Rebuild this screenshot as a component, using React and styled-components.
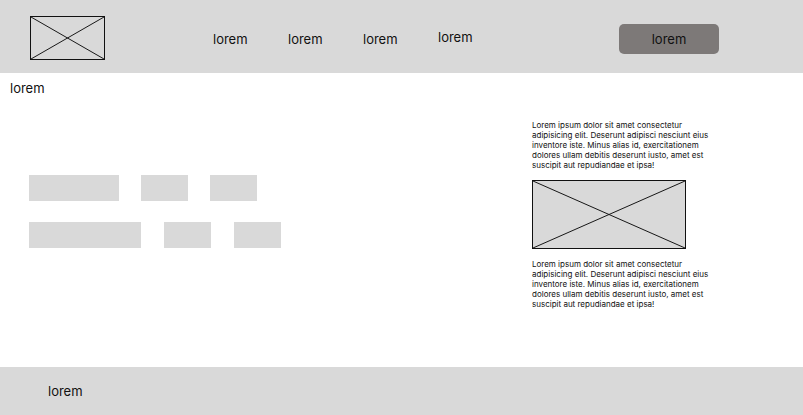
import styled, { createGlobalStyle } from "styled-components";

const GlobalStyle = createGlobalStyle`
  * {
    box-sizing: border-box;
  }

  body {
    margin: 0;
    font-family: "Inter", "Liberation Sans", sans-serif;
    color: #111;
    background: #fff;
  }
`;

const texto =
  "Lorem ipsum dolor sit amet consectetur adipisicing elit. Deserunt adipisci nesciunt eius inventore iste. Minus alias id, exercitationem dolores ullam debitis deserunt iusto, amet est suscipit aut repudiandae et ipsa!";

function Placeholder({ width, height, fill }) {
  return (
    <Imagem width={width} height={height} fill={fill}>
      <svg width="100%" height="100%" viewBox={`0 0 ${width} ${height}`} preserveAspectRatio="none">
        <line x1="0" y1="0" x2={width} y2={height} stroke="#111" strokeWidth="1" />
        <line x1="0" y1={height} x2={width} y2="0" stroke="#111" strokeWidth="1" />
      </svg>
    </Imagem>
  );
}

function App() {
  return (
    <Container>
      <GlobalStyle />
      <Header>
        <Placeholder width={75} height={44} />
        <Nav>
          <NavItem>lorem</NavItem>
          <NavItem>lorem</NavItem>
          <NavItem>lorem</NavItem>
          <NavItem raised>lorem</NavItem>
        </Nav>
        <Botao>lorem</Botao>
      </Header>

      <Main>
        <Titulo>lorem</Titulo>
        <Conteudo>
          <Blocos>
            <Linha>
              <Bloco width={90} />
              <Bloco width={47} />
              <Bloco width={47} />
            </Linha>
            <Linha>
              <Bloco width={112} />
              <Bloco width={47} />
              <Bloco width={47} />
            </Linha>
          </Blocos>
          <Lateral>
            <Paragrafo>{texto}</Paragrafo>
            <Placeholder width={154} height={69} fill />
            <Paragrafo>{texto}</Paragrafo>
          </Lateral>
        </Conteudo>
      </Main>

      <Footer>lorem</Footer>
    </Container>
  );
}

const Container = styled.div`
  width: 803px;
  height: 415px;
  display: flex;
  flex-direction: column;
`;

const Header = styled.header`
  height: 73px;
  background: #d9d9d9;
  display: flex;
  align-items: center;
  padding-left: 30px;
  padding-right: 84px;
  padding-top: 2px;
`;

const Imagem = styled.div`
  width: ${(p) => p.width}px;
  height: ${(p) => p.height}px;
  flex-shrink: 0;
  border: 1px solid #111;
  background: ${(p) => (p.fill ? "#d9d9d9" : "transparent")};

  svg {
    display: block;
  }
`;

const Nav = styled.nav`
  display: flex;
  gap: 42px;
  margin-left: 108px;
`;

const NavItem = styled.span`
  font-size: 13px;
  line-height: 16px;
  width: 33px;
  position: relative;
  top: ${(p) => (p.raised ? "-1px" : "1px")};
`;

const Botao = styled.button`
  margin-left: auto;
  margin-top: 3px;
  width: 100px;
  height: 30px;
  border: none;
  border-radius: 5px;
  background: #7d7978;
  font-family: "Inter", "Liberation Sans", sans-serif;
  font-size: 13px;
  color: #111;
`;

const Main = styled.main`
  flex: 1;
  display: flex;
  flex-direction: column;
`;

const Titulo = styled.div`
  font-size: 13px;
  line-height: 16px;
  padding: 7px 10px 0;
`;

const Conteudo = styled.div`
  display: flex;
  justify-content: space-between;
`;

const Blocos = styled.div`
  display: flex;
  flex-direction: column;
  gap: 21px;
  padding: 79px 0 0 29px;
`;

const Linha = styled.div`
  display: flex;
  gap: 22px;

  & + & {
    gap: 23px;
  }
`;

const Bloco = styled.div`
  width: ${(p) => p.width}px;
  height: 26px;
  background: #d9d9d9;
`;

const Lateral = styled.aside`
  width: 182px;
  margin-right: 89px;
  padding-top: 24px;
  display: flex;
  flex-direction: column;
  gap: 10px;
`;

const Paragrafo = styled.p`
  margin: 0;
  font-size: 8px;
  line-height: 10px;
`;

const Footer = styled.footer`
  height: 48px;
  background: #d9d9d9;
  display: flex;
  align-items: center;
  padding-left: 48px;
  font-size: 13px;
`;

export default App;
